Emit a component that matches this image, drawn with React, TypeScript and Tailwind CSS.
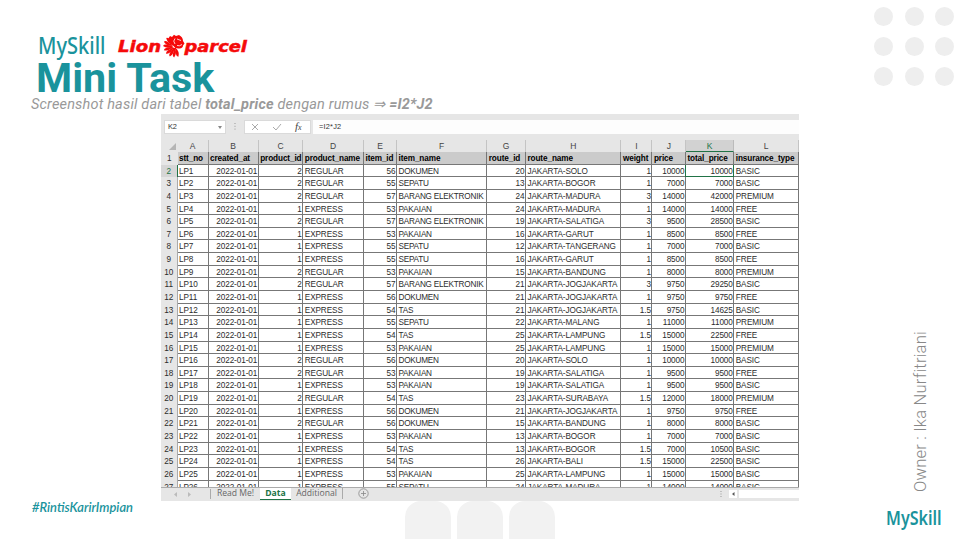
import React from 'react';

const COLS = 'grid grid-cols-[16.5px_31px_50.2px_44.6px_60.7px_33px_90.3px_38.7px_95.5px_31px_33.5px_48.3px_64.7px]';
const LETTERS = ['A', 'B', 'C', 'D', 'E', 'F', 'G', 'H', 'I', 'J', 'K', 'L'];
const HEADS = ['stt_no', 'created_at', 'product_id', 'product_name', 'item_id', 'item_name', 'route_id', 'route_name', 'weight', 'price', 'total_price', 'insurance_type'];
const RIGHT = [1, 2, 4, 6, 8, 9, 10];

const ITEMS: Record<number, string> = { 53: 'PAKAIAN', 54: 'TAS', 55: 'SEPATU', 56: 'DOKUMEN', 57: 'BARANG ELEKTRONIK' };

type Row = [number, number, number, string, number, number, number, string];
const ROWS: Row[] = [
  [2, 56, 20, 'SOLO', 1, 10000, 10000, 'BASIC'],
  [2, 55, 13, 'BOGOR', 1, 7000, 7000, 'BASIC'],
  [2, 57, 24, 'MADURA', 3, 14000, 42000, 'PREMIUM'],
  [1, 53, 24, 'MADURA', 1, 14000, 14000, 'FREE'],
  [2, 57, 19, 'SALATIGA', 3, 9500, 28500, 'BASIC'],
  [1, 53, 16, 'GARUT', 1, 8500, 8500, 'FREE'],
  [1, 55, 12, 'TANGERANG', 1, 7000, 7000, 'BASIC'],
  [1, 55, 16, 'GARUT', 1, 8500, 8500, 'FREE'],
  [2, 53, 15, 'BANDUNG', 1, 8000, 8000, 'PREMIUM'],
  [2, 57, 21, 'JOGJAKARTA', 3, 9750, 29250, 'BASIC'],
  [1, 56, 21, 'JOGJAKARTA', 1, 9750, 9750, 'FREE'],
  [1, 54, 21, 'JOGJAKARTA', 1.5, 9750, 14625, 'BASIC'],
  [1, 55, 22, 'MALANG', 1, 11000, 11000, 'PREMIUM'],
  [1, 54, 25, 'LAMPUNG', 1.5, 15000, 22500, 'FREE'],
  [1, 53, 25, 'LAMPUNG', 1, 15000, 15000, 'PREMIUM'],
  [2, 56, 20, 'SOLO', 1, 10000, 10000, 'BASIC'],
  [2, 53, 19, 'SALATIGA', 1, 9500, 9500, 'FREE'],
  [1, 53, 19, 'SALATIGA', 1, 9500, 9500, 'BASIC'],
  [2, 54, 23, 'SURABAYA', 1.5, 12000, 18000, 'PREMIUM'],
  [1, 56, 21, 'JOGJAKARTA', 1, 9750, 9750, 'FREE'],
  [2, 56, 15, 'BANDUNG', 1, 8000, 8000, 'BASIC'],
  [1, 53, 13, 'BOGOR', 1, 7000, 7000, 'BASIC'],
  [1, 54, 13, 'BOGOR', 1.5, 7000, 10500, 'BASIC'],
  [1, 54, 26, 'BALI', 1.5, 15000, 22500, 'BASIC'],
  [1, 53, 25, 'LAMPUNG', 1, 15000, 15000, 'BASIC'],
  [1, 55, 24, 'MADURA', 1, 14000, 14000, 'BASIC'],
];

function MySkill({ className, bold }: { className: string; bold?: boolean }) {
  return (
    <svg className={`${className} overflow-visible`} viewBox="0 0 68 24">
      <text x="0" y="18" fontFamily="'Noto Sans', sans-serif" fontSize="23.5" fontWeight={bold ? 600 : 500} textLength="67.5" lengthAdjust="spacingAndGlyphs" fill="#1a939c">MySkill</text>
    </svg>
  );
}

function LionParcel() {
  const feathers = [85, 107, 129, 151, 173, 195, 217, 239];
  return (
    <svg className="ml-[11px] h-[26px] w-[132px]" viewBox="0 0 132 26">
      <g fill="#f50a0a" fontFamily="'DejaVu Sans', sans-serif" fontWeight="700" fontStyle="italic" fontSize="16" stroke="#f50a0a" strokeWidth="0.5">
        <text x="1" y="19" textLength="43" lengthAdjust="spacingAndGlyphs">Lion</text>
        <text x="67.5" y="19" textLength="62.5" lengthAdjust="spacingAndGlyphs">parcel</text>
      </g>
      <g fill="#f50a0a">
        <path d="M51 6 L53 3 L55 4 L57 1.8 L59 3 L62 2 Q66 4 66 8 L67.5 10.5 L66 12.5 Q66 15 62.5 15.5 Q58 16 56.5 13 Q53 10 51 6Z" />
        {feathers.map((a) => (
          <path key={a} transform={`translate(57.5 13) rotate(${a - 15})`} d="M2 -.4 Q7 -3.2 11.5 0 Q10.5 1.8 8 1.4 Q5 .2 2 .5Z" />
        ))}
        <path d="M58 5.5 Q55.5 8 58 11 M60 6 L64 7.5 M60 12.5 Q62.5 13.5 65 11.5" fill="none" stroke="#fff" strokeWidth=".8" />
      </g>
    </svg>
  );
}

function FormulaBar() {
  return (
    <div className="flex h-[14px] shrink-0 items-stretch bg-[#e6e6e6] text-[7.4px] text-[#333]">
      <div className="ml-[3px] flex w-[62px] items-center justify-between border border-[#dadada] bg-white px-[3px]">
        <span>K2</span>
        <svg className="h-[3px] w-[4px]" viewBox="0 0 4 3"><path d="M0 0H4L2 3Z" fill="#888" /></svg>
      </div>
      <div className="flex w-[18px] items-center justify-center">
        <svg className="h-2 w-[2px]" viewBox="0 0 2 8"><path d="M1 0V8" stroke="#999" strokeDasharray="1 1.8" /></svg>
      </div>
      <div className="flex w-[67px] items-center border border-[#dadada] bg-white">
        <svg className="h-3 w-[65px]" viewBox="0 0 65 12" fill="none" stroke="#aaa">
          <path d="M7 3L13 9M13 3L7 9M28 6L31 9L36 3" />
          <text x="50" y="9" fill="#444" stroke="none" fontFamily="'Liberation Serif', serif" fontStyle="italic" fontSize="11">f<tspan fontSize="8">x</tspan></text>
        </svg>
      </div>
      <div className="ml-[2px] flex grow items-center bg-[#fdfdfd] pl-[6px] tracking-[0.2px]">=I2*J2</div>
    </div>
  );
}

function Sheet() {
  return (
    <div className="flex h-[387px] w-[638px] flex-col overflow-hidden bg-[#e6e6e6] pt-[6px] font-['Liberation_Sans',Arial,sans-serif] text-[8.2px] tracking-[-0.1px] text-[#2c2c2c]">
      <FormulaBar />
      <div className={`${COLS} mt-[6px] h-[12px] shrink-0 leading-[13px] text-[#444]`}>
        <svg className="ml-[8px] mt-[3px] h-[7px] w-[7px]" viewBox="0 0 7 7"><path d="M7 0V7H0Z" fill="#b5b5b5" /></svg>
        {LETTERS.map((l) => (
          <div key={l} className={`h-[12px] border-r text-center text-[8.5px] ${l === 'K' ? 'border-b border-r-[#bbb] border-b-[#217346] bg-[#d2d2d2] text-[#217346]' : 'border-[#c4c4c4]'}`}>{l}</div>
        ))}
      </div>
      <div className="h-[335px] shrink-0 overflow-hidden">
        <div className={`${COLS} h-[12.6px] font-bold leading-[14px]`}>
          <div className="h-[12.6px] bg-[#e6e6e6] text-center font-normal">1</div>
          {HEADS.map((h) => (
            <div key={h} className="h-[12.6px] whitespace-nowrap border-b border-r border-[#777] bg-[#cbcbcb] pl-[1.5px] text-black">{h}</div>
          ))}
        </div>
        {ROWS.map((r, i) => {
          const cells = ['LP' + (i + 1), '2022-01-01', r[0], r[0] === 2 ? 'REGULAR' : 'EXPRESS', r[1], ITEMS[r[1]], r[2], 'JAKARTA-' + r[3], r[4], r[5], r[6], r[7]];
          return (
            <div key={i} className={`${COLS} h-[12.65px] bg-white leading-[14px]`}>
              <div className={`h-[12.65px] border-r text-center ${i === 0 ? 'border-[#217346] bg-[#d6d6d6] text-[#217346]' : 'border-[#aaa] bg-[#e6e6e6]'}`}>{i + 2}</div>
              {cells.map((c, j) => (
                <div
                  key={j}
                  className={`h-[12.65px] whitespace-nowrap border-b border-r ${RIGHT.includes(j) ? 'pr-[0.5px] text-right' : 'pl-[1.5px]'} ${j === 5 ? 'tracking-[-0.22px]' : ''} ${i === 0 && j === 10 ? 'border-[#217346] shadow-[-1px_0_0_#217346]' : 'border-[#777]'}`}
                >
                  {c}
                </div>
              ))}
            </div>
          );
        })}
      </div>
      <div className="flex grow items-start border-t border-[#aaa] font-['Open_Sans',sans-serif] text-[8.6px] leading-[10px] tracking-normal text-[#666]">
        <svg className="h-[12px] w-[50px]" viewBox="0 0 50 12" fill="#bbb"><path d="M16 4V9L13 6.5ZM27 4V9L30 6.5Z" /><path d="M49.5 1V11" stroke="#aaa" /></svg>
        <div className="w-[49px] text-center">Read Me!</div>
        <div className="h-[12px] w-[31px] border-b border-[#217346] bg-white text-center font-bold text-[#217346]">Data</div>
        <div className="h-[11px] w-[52px] border-r border-[#aaa] text-center">Additional</div>
        <svg className="ml-[15px] h-[11px] w-[11px]" viewBox="0 0 11 11" fill="none" stroke="#888" strokeWidth=".8"><circle cx="5.5" cy="5.5" r="4.7" /><path d="M3 5.5H8M5.5 3V8" /></svg>
        <svg className="ml-auto h-[12px] w-[79px]" viewBox="0 0 79 12"><path d="M1 3V10" stroke="#999" strokeDasharray="1 1.5" /><path d="M9 2H17V10H9ZM19 2H79V10H19Z" fill="#fff" /><path d="M14.5 4V8L12 6Z" fill="#555" /></svg>
      </div>
    </div>
  );
}

export default function App() {
  return (
    <div className="flex h-[540px] w-[960px] overflow-hidden bg-white">
      <main className="flex w-[799px] shrink-0 flex-col">
        <header className="h-[114px] shrink-0 pt-[33px] font-['Roboto',sans-serif]">
          <div className="flex h-[26px] pl-[38px]">
            <MySkill className="mt-[3px] h-[24px] w-[68px]" />
            <LionParcel />
          </div>
          <h1 className="ml-[36px] h-[36px] whitespace-nowrap text-[41.3px] font-bold leading-[38px] text-[#1a939c]">Mini Task</h1>
          <p className="ml-[31px] whitespace-nowrap text-[14.5px] italic leading-[20px] tracking-[0.18px] text-[#999]">
            Screenshot hasil dari tabel <b>total_price</b> dengan rumus ⇒ <b>=I2*J2</b>
          </p>
        </header>
        <div className="flex grow">
          <div className="flex w-[161px] shrink-0 flex-col justify-end pb-[21px] pl-[31px]">
            <svg className="h-[20px] w-[103px]" viewBox="0 0 103 20">
              <text x="1" y="13" fontFamily="Lato, sans-serif" fontStyle="italic" fontWeight="600" fontSize="12.5" textLength="101" lengthAdjust="spacingAndGlyphs" fill="#1a939c">#RintisKarirImpian</text>
            </svg>
          </div>
          <div>
            <Sheet />
            <div className="ml-[244px] flex gap-[6px]">
              {[0, 1, 2].map((i) => <div key={i} className="h-[37.5px] w-[46px] rounded-t-[16px] bg-[#f2f2f2]" />)}
            </div>
          </div>
        </div>
      </main>
      <aside className="flex grow flex-col pt-[7px]">
        <div className="ml-[75px] grid w-max grid-cols-3 gap-x-[11.7px] gap-y-[11px]">
          {[0, 1, 2, 3, 4, 5, 6, 7, 8].map((i) => <div key={i} className="h-[19px] w-[19px] rounded-full bg-[#eee]" />)}
        </div>
        <div className="ml-[112px] mt-[240px] flex h-[166px] w-[20px] rotate-180 items-center whitespace-nowrap font-['Roboto',sans-serif] text-[16.6px] font-light leading-[20px] tracking-[0.2px] text-[#888] [writing-mode:vertical-rl]">Owner : Ika Nurfitriani</div>
        <MySkill bold className="ml-[87px] mt-[18px] h-[20px] w-[56px]" />
      </aside>
    </div>
  );
}
